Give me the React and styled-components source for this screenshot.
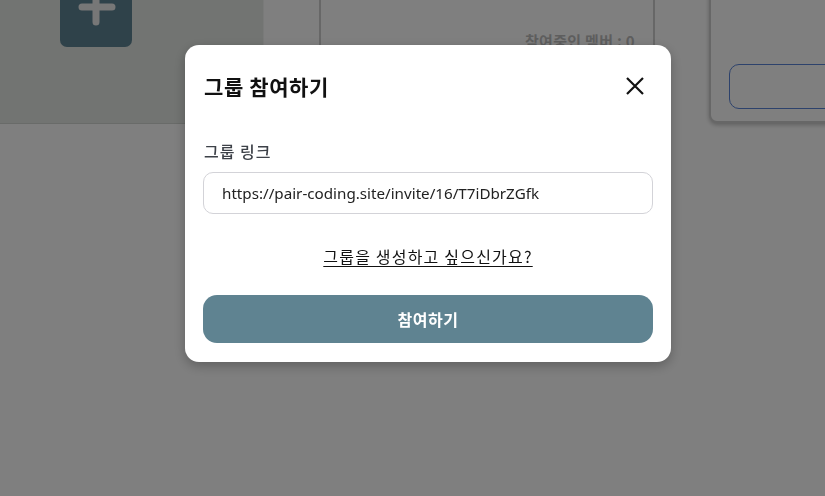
import React from 'react'
import styled, { createGlobalStyle } from 'styled-components';

const GlobalStyle = createGlobalStyle`
  html, body {
    margin: 0;
    padding: 0;
    height: 496px;
    overflow: hidden;
    background: #ffffff;
    font-family: "Noto Sans", "Noto Sans CJK KR", sans-serif;
  }
  * { box-sizing: border-box; }
`;

const Page = styled.div`
  display: flex;
  align-items: flex-start;
  height: 496px;
  overflow: hidden;
  background: #ffffff;
`;

const SidePanel = styled.div`
  width: 264px;
  height: 124px;
  flex-shrink: 0;
  background: #e4e8e4;
  border-bottom: 1px solid #d2d6d2;
  border-right: 1px solid #f2f4f2;
  padding-left: 60px;
`;

const AddButton = styled.div`
  width: 72px;
  height: 47px;
  background: #5e8494;
  border-radius: 0 0 7px 7px;
  display: flex;
  justify-content: center;
`;

const PlusIcon = styled.svg`
  margin-top: -14px;
`;

const CardRow = styled.div`
  display: flex;
  gap: 54px;
  padding-left: 55px;
  margin-top: -20px;
`;

const Card = styled.div`
  width: 336px;
  height: 143px;
  flex-shrink: 0;
  border: 2px solid #cfcfcf;
  border-radius: 8px;
  background: #ffffff;
  box-shadow: ${p => p.$raised ? '0 2px 4px rgba(0,0,0,0.25)' : 'none'};
  display: flex;
  flex-direction: column;
  justify-content: flex-end;
  padding: 0 18px 12px 18px;
`;

const MemberCount = styled.div`
  text-align: right;
  font-family: "Noto Sans CJK KR", sans-serif;
  font-size: 15px;
  font-weight: 700;
  color: #bdbdbd;
  letter-spacing: 0.3px;
  margin-bottom: 58px;
`;

const OutlineButton = styled.div`
  height: 45px;
  border: 1px solid #5a84d8;
  border-radius: 10px;
  width: 420px;
`;

const Overlay = styled.div`
  position: fixed;
  inset: 0;
  background: rgba(0, 0, 0, 0.5);
  display: flex;
  align-items: flex-start;
  padding: 45px 0 0 185px;
`;

const Modal = styled.div`
  width: 486px;
  background: #ffffff;
  border-radius: 14px;
  box-shadow: 0 4px 12px rgba(0, 0, 0, 0.25);
  padding: 20px 18px 19px 18px;
  display: flex;
  flex-direction: column;
`;

const Header = styled.div`
  height: 42px;
  display: flex;
  align-items: center;
  justify-content: space-between;
`;

const Title = styled.h2`
  margin: 0;
  font-family: "Noto Sans CJK KR", sans-serif;
  font-size: 21px;
  font-weight: 700;
  letter-spacing: 0.6px;
  color: #111111;
  padding-left: 1px;
`;

const CloseButton = styled.button`
  border: none;
  background: none;
  padding: 0;
  width: 24px;
  height: 24px;
  margin-right: 6px;
  display: flex;
  cursor: pointer;
`;

const Label = styled.label`
  margin-top: 34px;
  height: 20px;
  line-height: 20px;
  font-family: "Noto Sans CJK KR", sans-serif;
  font-size: 16px;
  font-weight: 500;
  letter-spacing: 1px;
  color: #3d4148;
  padding-left: 1px;
`;

const Input = styled.input`
  margin-top: 11px;
  height: 42px;
  width: 100%;
  border: 1px solid #d3d3d8;
  border-radius: 10px;
  padding: 0 18px;
  font-family: "Noto Sans", sans-serif;
  font-size: 15.2px;
  color: #222222;
  outline: none;
`;

const LinkText = styled.a`
  margin-top: 31px;
  align-self: center;
  height: 22px;
  line-height: 22px;
  font-family: "Noto Sans CJK KR", sans-serif;
  font-size: 16px;
  letter-spacing: 1.2px;
  color: #111111;
  text-decoration: underline;
  text-underline-offset: 3px;
  cursor: pointer;
`;

const SubmitButton = styled.button`
  margin-top: 28px;
  height: 48px;
  width: 100%;
  border: none;
  border-radius: 14px;
  background: #5f8391;
  color: #ffffff;
  font-family: "Noto Sans CJK KR", sans-serif;
  font-size: 16px;
  font-weight: 700;
  letter-spacing: 0.5px;
  cursor: pointer;
`;

export default function App() {
  return (
    <>
      <GlobalStyle />
      <Page>
        <SidePanel>
          <AddButton>
            <PlusIcon width="40" height="40" viewBox="0 0 40 40">
              <path d="M20 6v30M6 21h30" stroke="#eeeeee" strokeWidth="7" strokeLinecap="round" />
            </PlusIcon>
          </AddButton>
        </SidePanel>
        <CardRow>
          <Card>
            <MemberCount>참여중인 멤버 : 0</MemberCount>
          </Card>
          <Card $raised>
            <OutlineButton />
          </Card>
        </CardRow>
      </Page>
      <Overlay>
        <Modal>
          <Header>
            <Title>그룹 참여하기</Title>
            <CloseButton aria-label="닫기">
              <svg width="24" height="24" viewBox="0 0 24 24">
                <path d="M4 4L20 20M20 4L4 20" stroke="#111111" strokeWidth="2.2" />
              </svg>
            </CloseButton>
          </Header>
          <Label>그룹 링크</Label>
          <Input readOnly value="https://pair-coding.site/invite/16/T7iDbrZGfk" />
          <LinkText>그룹을 생성하고 싶으신가요?</LinkText>
          <SubmitButton>참여하기</SubmitButton>
        </Modal>
      </Overlay>
    </>
  )
}
